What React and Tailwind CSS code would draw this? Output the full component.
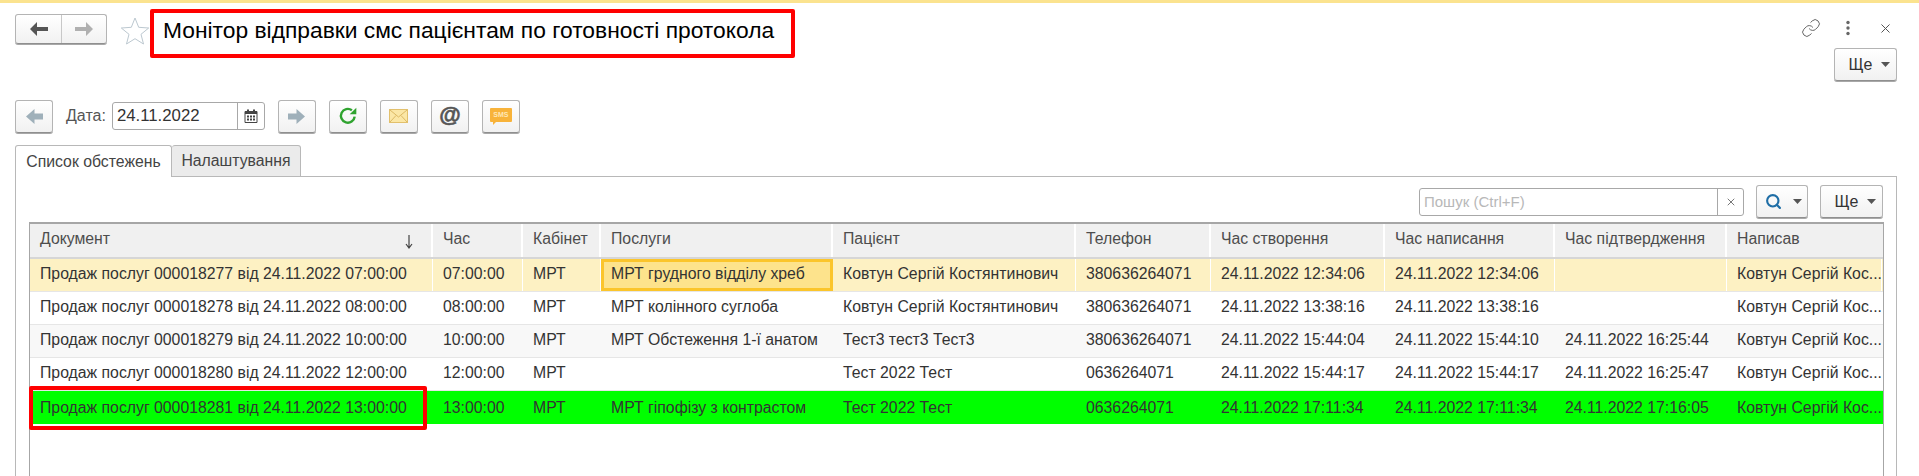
import React from "react";
import { Link, X, Search } from "lucide-react";

const cols = "grid grid-cols-[403px_90px_78px_232px_243px_135px_174px_170px_172px_155px]";
const headers = ["Документ","Час","Кабінет","Послуги","Пацієнт","Телефон","Час створення","Час написання","Час підтвердження","Написав"];
const W = "Ковтун Сергій Кос...";
const rows = [
  { bg: "bg-[#fdf1c3]", cells: ["Продаж послуг 000018277 від 24.11.2022 07:00:00","07:00:00","МРТ","МРТ грудного відділу хреб","Ковтун Сергій Костянтинович","380636264071","24.11.2022 12:34:06","24.11.2022 12:34:06","",W] },
  { bg: "bg-white", cells: ["Продаж послуг 000018278 від 24.11.2022 08:00:00","08:00:00","МРТ","МРТ колінного суглоба","Ковтун Сергій Костянтинович","380636264071","24.11.2022 13:38:16","24.11.2022 13:38:16","",W] },
  { bg: "bg-[#f8f8f8]", cells: ["Продаж послуг 000018279 від 24.11.2022 10:00:00","10:00:00","МРТ","МРТ Обстеження 1-ї анатом","Тест3 тест3 Тест3","380636264071","24.11.2022 15:44:04","24.11.2022 15:44:10","24.11.2022 16:25:44",W] },
  { bg: "bg-white", cells: ["Продаж послуг 000018280 від 24.11.2022 12:00:00","12:00:00","МРТ","","Тест 2022 Тест","0636264071","24.11.2022 15:44:17","24.11.2022 15:44:17","24.11.2022 16:25:47",W] },
  { bg: "bg-[#00ff00]", cells: ["Продаж послуг 000018281 від 24.11.2022 13:00:00","13:00:00","МРТ","МРТ гіпофізу з контрастом","Тест 2022 Тест","0636264071","24.11.2022 17:11:34","24.11.2022 17:11:34","24.11.2022 17:16:05",W] },
];

const btn = "flex items-center justify-center rounded-[3px] border border-[#b4b4b4] border-b-[#8f8f8f] bg-linear-to-b from-white to-[#f1f1f1] shadow-[0_1px_0_#a8a8a8]";

const Caret = () => (
  <svg width="9" height="5" viewBox="0 0 9 5"><path d="M0 0h9L4.5 5z" fill="#555" /></svg>
);

const BlockArrow = ({ left }) => (
  <svg width="17" height="15" viewBox="0 0 17 15" className={left ? "-scale-x-100" : ""}>
    <path d="M0 4.5h8.5V0L17 7.5 8.5 15v-4.500H0z" fill="#9fb0ba" />
  </svg>
);

const NavArrow = ({ left, color }) => (
  <svg width="18" height="14" viewBox="0 0 18 14" className={left ? "-scale-x-100" : ""}>
    <path d="M0 5h11V0l7 7-7 7V9H0z" fill={color} />
  </svg>
);

const More = ({ className }) => (
  <div className={`${btn} gap-[9px] w-[63px] h-[33px] pl-[8px] text-[16px] text-[#333] ${className}`}>
    <span>Ще</span><Caret />
  </div>
);

export default function App() {
  return (
    <div className="w-[1919px] h-[476px] overflow-hidden bg-white flex flex-col font-['Liberation_Sans',Arial,sans-serif] text-[15.8px] text-[#333]">
      <div className="h-[3px] bg-[#fbe38f] shrink-0" />

      <header className="h-[96px] shrink-0 flex items-start pl-[15px] pr-[22px]">
        <div className="mt-[11px] flex w-[92px] h-[30px] rounded-[3px] border border-[#b4b4b4] border-b-[#8f8f8f] bg-linear-to-b from-white to-[#f1f1f1] shadow-[0_1px_0_#a8a8a8]">
          <div className="w-[46px] flex items-center justify-center border-r border-[#c8c8c8]"><NavArrow left color="#555555" /></div>
          <div className="flex-1 flex items-center justify-center"><NavArrow color="#b0b0b0" /></div>
        </div>
        <svg width="30" height="30" viewBox="0 0 30 30" className="mt-[13px] ml-[13px] shrink-0">
          <path d="M15 2l3.700 9.300 10 .700-7.700 6.300 2.500 9.700L15 22.700 6.500 28 9 18.300 1.300 12l10-.700z" fill="white" stroke="#bcc8d0" strokeWidth="1" />
        </svg>
        <div className="mt-[6px] w-[645px] h-[49px] shrink-0 flex items-center pl-[9px] pb-[7px] border-4 border-[#ff0000] rounded-[2px] text-[22.8px] text-black whitespace-nowrap">
          Монітор відправки смс пацієнтам по готовності протокола
        </div>
        <div className="ml-auto flex flex-col items-end">
          <div className="mt-[15px] flex items-center text-[#666] mr-[4px]">
            <Link size={20} strokeWidth={1.2} className="text-[#666]" />
            <svg width="6" height="16" viewBox="0 0 6 16" className="ml-[24px]">
              <circle cx="3" cy="2.500" r="1.700" fill="#666" />
              <circle cx="3" cy="8" r="1.700" fill="#666" />
              <circle cx="3" cy="13.500" r="1.700" fill="#666" />
            </svg>
            <X size={15} strokeWidth={1.6} className="ml-[27px] text-[#555]" />
          </div>
          <More className="mt-[10px]" />
        </div>
      </header>

      <div className="h-[34px] shrink-0 flex items-center pl-[15px]">
        <div className={`${btn} w-[38px] h-[33px]`}><BlockArrow left /></div>
        <span className="ml-[13px] text-[16px] text-[#555]">Дата:</span>
        <div className="ml-[6px] w-[153px] h-[28px] flex rounded-[3px] border border-[#a8a8a8] bg-white">
          <span className="flex-1 flex items-center pl-[4px] text-[16.8px]">24.11.2022</span>
          <div className="w-[27px] flex items-center justify-center border-l border-[#a8a8a8]">
            <svg width="14" height="14" viewBox="0 0 14 14">
              <path d="M1 2.500h12v11H1z" fill="white" stroke="#444" />
              <path d="M1 2.500h12V5H1zM3 .5h2v3H3zM9 .5h2v3H9z" fill="#444" />
              <path d="M3 6.500h2v2H3zM6 6.500h2v2H6zM9 6.500h2v2H9zM3 9.500h2v2H3zM6 9.500h2v2H6zM9 9.500h2v2H9z" fill="#444" />
            </svg>
          </div>
        </div>
        <div className={`${btn} ml-[13px] w-[38px] h-[33px]`}><BlockArrow /></div>
        <div className={`${btn} ml-[13px] w-[38px] h-[33px]`}>
          <svg width="20" height="20" viewBox="0 0 18 18" fill="none">
            <path d="M15 9.500A6.200 6.200 0 1 1 12.500 3.800" stroke="#2fa32f" strokeWidth="2.200" />
            <path d="M10.500 7.500L16.500 7.500 16.500 1.500z" fill="#2fa32f" />
          </svg>
        </div>
        <div className={`${btn} ml-[13px] w-[38px] h-[33px]`}>
          <svg width="19" height="14" viewBox="0 0 19 14">
            <rect x=".5" y=".5" width="18" height="13" fill="#fbe7a6" stroke="#e2c06c" />
            <path d="M1 1l8.500 7L18 1M1 13l6-6.500M18 13l-6-6.500" fill="none" stroke="#dcb964" />
          </svg>
        </div>
        <div className={`${btn} ml-[13px] w-[38px] h-[33px] text-[22px] font-bold text-[#555] pb-[4px] [-webkit-text-stroke:0.6px_#555]`}>@</div>
        <div className={`${btn} ml-[13px] w-[38px] h-[33px]`}>
          <div className="relative w-[22px] h-[14px] mb-[2px] rounded-[1px] bg-[#f8b33a] flex items-center justify-center text-[7px] font-bold text-[#ffe7b5]">
            SMS
            <span className="absolute left-[3px] -bottom-[3px] w-0 h-0 border-t-[3px] border-r-[3px] border-t-[#f8b33a] border-r-transparent" />
          </div>
        </div>
      </div>

      <div className="mt-[12px] h-[32px] shrink-0 flex pl-[15px] -mb-[1px] relative">
        <div className="w-[157px] flex items-center justify-center rounded-t-[3px] border border-b-0 border-[#b8b8b8] bg-white text-[#444]">Список обстежень</div>
        <div className="w-[129px] flex items-center justify-center rounded-t-[3px] border border-l-0 border-[#b8b8b8] bg-[#ebebeb] text-[#444]">Налаштування</div>
      </div>

      <section className="flex-1 min-h-0 ml-[15px] mr-[22px] border border-b-0 border-[#b8b8b8] flex flex-col pl-[13px] pr-[13px]">
        <div className="h-[45px] shrink-0 flex items-start justify-end">
          <div className="mt-[11px] w-[325px] h-[28px] flex rounded-[3px] border border-[#a8a8a8] bg-white">
            <span className="flex-1 flex items-center pl-[4px] text-[15px] text-[#b8b8b8]">Пошук (Ctrl+F)</span>
            <div className="w-[26px] flex items-center justify-center border-l border-[#a8a8a8]"><X size={12} strokeWidth={1.6} className="text-[#555]" /></div>
          </div>
          <div className={`${btn} mt-[8px] ml-[12px] w-[52px] h-[33px] gap-[11px] pl-[2px]`}>
            <Search size={17} strokeWidth={3} className="text-[#1f6ea6]" /><Caret />
          </div>
          <More className="mt-[8px] ml-[12px]" />
        </div>

        <div className="relative flex-1 min-h-0 border-t-2 border-x border-[#a6a6a6] -mr-[1px]">
          <div className={`${cols} h-[35px] bg-[#f0f0f0] border-b-2 border-[#d6d6d6]`}>
            {headers.map((h, i) => (
              <div key={h} className="relative flex items-center pl-[10px] pb-[3px] border-r-2 border-white text-[#4d4d4d] whitespace-nowrap last:border-r-0">
                {h}
                {i === 0 && (
                  <svg width="8" height="14" viewBox="0 0 8 14" className="absolute right-[18px] top-[11px]">
                    <path d="M4 0v12M1 9l3 4 3-4" fill="none" stroke="#444" strokeWidth="1.200" />
                  </svg>
                )}
              </div>
            ))}
          </div>
          {rows.map((r, ri) => (
            <div key={ri} className={`${cols} h-[33px] ${r.bg} ${ri === 4 ? "" : "border-b-[1.500px] border-[#e6e6e6]"}`}>
              {r.cells.map((c, ci) => (
                <div
                  key={ci}
                  className={`flex items-center whitespace-nowrap overflow-hidden ${ri === 4 ? "pb-0" : "pb-[2px]"} ${
                    ri === 0 && ci === 3
                      ? "pl-[7px] bg-[#fde38c] border-[3px] border-[#fbc52b]"
                      : "pl-[10px]"
                  } ${ri === 0 && ci !== 3 ? "border-r border-white" : ""}`}
                >
                  {c}
                </div>
              ))}
            </div>
          ))}
          <div className="absolute left-[-1px] top-[162px] w-[398px] h-[44px] border-4 border-[#ff0000] rounded-[2px]" />
        </div>
      </section>
    </div>
  );
}
